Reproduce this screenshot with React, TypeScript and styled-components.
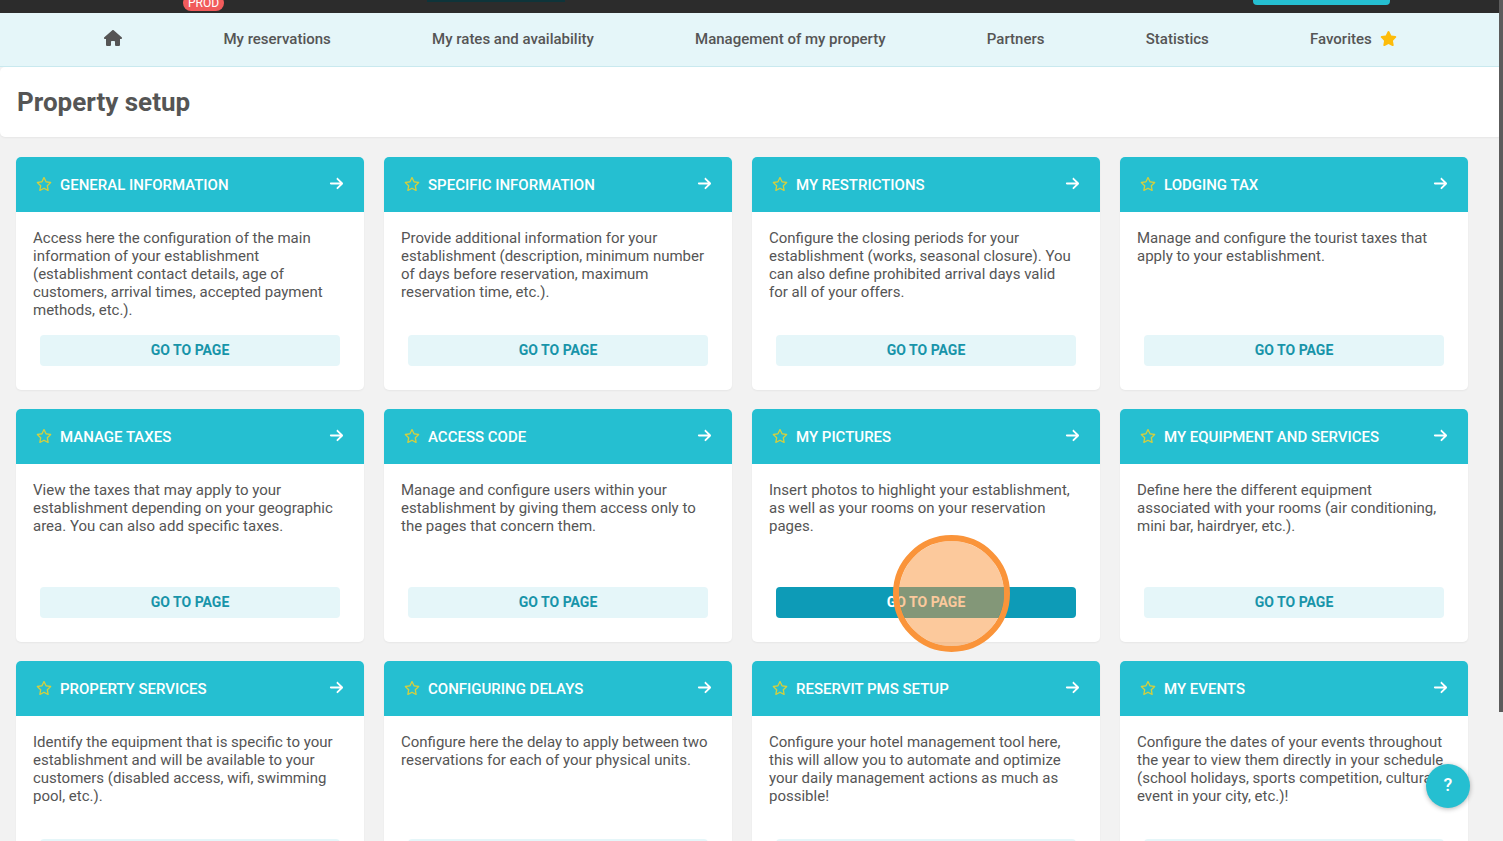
import React from "react";
import styled, { createGlobalStyle } from "styled-components";
import { FaArrowRight, FaHouse, FaRegStar, FaStar } from "react-icons/fa6";

const GlobalStyle = createGlobalStyle`
  * { box-sizing: border-box; }
  body {
    margin: 0;
    background: #f2f2f2;
    color: #555;
    font-family: Roboto, "Liberation Sans", sans-serif;
    font-size: 15px;
    line-height: 18px;
  }
`;

const Page = styled.div`
  position: relative;
  height: 100vh;
  overflow: hidden;
`;

const TopBar = styled.header`
  display: flex;
  position: relative;
  height: 13px;
  background: #2c2c2c;
`;

const EnvBadge = styled.span`
  position: absolute;
  left: 183px;
  bottom: 2px;
  padding: 0 5px;
  border-radius: 8px;
  background: #f15b5b;
  color: #fff;
  font-size: 12px;
  line-height: 16px;
`;

const SearchEdge = styled.span`
  position: absolute;
  left: 427px;
  top: 0;
  width: 138px;
  height: 2px;
  background: #0e343a;
`;

const ActionEdge = styled.span`
  position: absolute;
  right: 113px;
  bottom: 8px;
  width: 137px;
  height: 32px;
  border-radius: 4px;
  background: #25bfd1;
`;

const Nav = styled.nav`
  display: flex;
  justify-content: space-evenly;
  align-items: center;
  height: 54px;
  padding: 0 5px 1px 3px;
  border-bottom: 1px solid #c9e9ef;
  background: #e5f6f9;
`;

const NavLink = styled.a`
  display: flex;
  align-items: center;
  gap: 8px;
  color: #555;
  font-weight: 500;
  text-decoration: none;

  svg {
    margin-bottom: 2px;
  }
`;

const TitleBar = styled.div`
  padding: 19px 17px;
  border-radius: 5px;
  background: #fff;
  box-shadow: 0 1px 2px rgba(0, 0, 0, 0.05);
`;

const Title = styled.h1`
  margin: 0;
  font-size: 26px;
  line-height: 32px;
  font-weight: 700;
`;

const Grid = styled.main`
  display: grid;
  grid-template-columns: repeat(4, 1fr);
  gap: 19px 20px;
  padding: 20px 35px 20px 16px;
`;

const Card = styled.section`
  display: flex;
  flex-direction: column;
  border-radius: 5px;
  background: #fff;
  box-shadow: 0 1px 2px rgba(0, 0, 0, 0.05);
`;

const CardHeader = styled.div`
  display: flex;
  align-items: center;
  height: 55px;
  padding: 0 20px;
  border-radius: 5px 5px 0 0;
  background: #25bfd1;
  color: #fff;
`;

const IconButton = styled.button<{ $color: string }>`
  display: flex;
  padding: 0 0 2px;
  border: 0;
  background: none;
  color: ${(p) => p.$color};
  font-size: 14px;
  cursor: pointer;
`;

const CardTitle = styled.h2`
  flex: 1;
  margin: 0 0 0 8px;
  font-size: 15px;
  font-weight: 500;
`;

const CardText = styled.p`
  min-height: 90px;
  margin: 17px 23px 16px 17px;
`;

const GoButton = styled.button<{ $active?: boolean }>`
  height: 31px;
  margin: auto 24px 24px;
  padding: 0 0 2px;
  border: 0;
  border-radius: 4px;
  background: ${(p) => (p.$active ? "#0d9bb7" : "#e5f6f9")};
  color: ${(p) => (p.$active ? "#fff" : "#1894a9")};
  font: 700 14px/18px Roboto, "Liberation Sans", sans-serif;
  cursor: pointer;
`;

const GoArea = styled.div`
  display: grid;
  position: relative;
  margin-top: auto;
`;

const ClickMarker = styled.span`
  position: absolute;
  left: 141px;
  top: -52px;
  width: 117px;
  height: 117px;
  border: 6px solid #fa943a;
  border-radius: 50%;
  background: rgba(250, 148, 58, 0.5);
  background-clip: padding-box;
  pointer-events: none;
`;

const HelpButton = styled.button`
  position: absolute;
  right: 33px;
  bottom: 33px;
  width: 44px;
  height: 44px;
  padding: 0 0 2px;
  border: 0;
  border-radius: 50%;
  background: #25bfd1;
  box-shadow: 0 1px 5px rgba(0, 0, 0, 0.3);
  color: #fff;
  font: 500 18px/24px Roboto, "Liberation Sans", sans-serif;
  cursor: pointer;
`;

const ScrollThumb = styled.div`
  position: absolute;
  top: 0;
  right: 0;
  width: 4px;
  height: 712px;
  max-height: 100%;
  background: #5c5c5c;
`;

const links = [
  "My reservations",
  "My rates and availability",
  "Management of my property",
  "Partners",
  "Statistics",
];

const cards = [
  { title: "GENERAL INFORMATION", text: "Access here the configuration of the main information of your establishment (establishment contact details, age of customers, arrival times, accepted payment methods, etc.)." },
  { title: "SPECIFIC INFORMATION", text: "Provide additional information for your establishment (description, minimum number of days before reservation, maximum reservation time, etc.)." },
  { title: "MY RESTRICTIONS", text: "Configure the closing periods for your establishment (works, seasonal closure). You can also define prohibited arrival days valid for all of your offers." },
  { title: "LODGING TAX", text: "Manage and configure the tourist taxes that apply to your establishment." },
  { title: "MANAGE TAXES", text: "View the taxes that may apply to your establishment depending on your geographic area. You can also add specific taxes." },
  { title: "ACCESS CODE", text: "Manage and configure users within your establishment by giving them access only to the pages that concern them." },
  { title: "MY PICTURES", text: "Insert photos to highlight your establishment, as well as your rooms on your reservation pages.", active: true },
  { title: "MY EQUIPMENT AND SERVICES", text: "Define here the different equipment associated with your rooms (air conditioning, mini bar, hairdryer, etc.)." },
  { title: "PROPERTY SERVICES", text: "Identify the equipment that is specific to your establishment and will be available to your customers (disabled access, wifi, swimming pool, etc.)." },
  { title: "CONFIGURING DELAYS", text: "Configure here the delay to apply between two reservations for each of your physical units." },
  { title: "RESERVIT PMS SETUP", text: "Configure your hotel management tool here, this will allow you to automate and optimize your daily management actions as much as possible!" },
  { title: "MY EVENTS", text: "Configure the dates of your events throughout the year to view them directly in your schedule (school holidays, sports competition, cultural event in your city, etc.)!" },
];

export default function App() {
  return (
    <Page>
      <GlobalStyle />
      <TopBar>
        <EnvBadge>PROD</EnvBadge>
        <SearchEdge />
        <ActionEdge />
      </TopBar>
      <Nav>
        <NavLink href="#home" aria-label="Home">
          <FaHouse size={18} />
        </NavLink>
        {links.map((label) => (
          <NavLink key={label} href="#menu">
            {label}
          </NavLink>
        ))}
        <NavLink href="#favorites">
          Favorites <FaStar size={17} color="#fdbc0b" />
        </NavLink>
      </Nav>
      <TitleBar>
        <Title>Property setup</Title>
      </TitleBar>
      <Grid>
        {cards.map((card) => (
          <Card key={card.title}>
            <CardHeader>
              <IconButton $color="#d3cf3f" aria-label={"Add to favorites: " + card.title}>
                <FaRegStar size={16} />
              </IconButton>
              <CardTitle>{card.title}</CardTitle>
              <IconButton $color="#fff" aria-label={"Open: " + card.title}>
                <FaArrowRight size={15} />
              </IconButton>
            </CardHeader>
            <CardText>{card.text}</CardText>
            <GoArea>
              <GoButton $active={card.active}>GO TO PAGE</GoButton>
              {card.active && <ClickMarker />}
            </GoArea>
          </Card>
        ))}
      </Grid>
      <HelpButton aria-label="Help">?</HelpButton>
      <ScrollThumb />
    </Page>
  );
}
